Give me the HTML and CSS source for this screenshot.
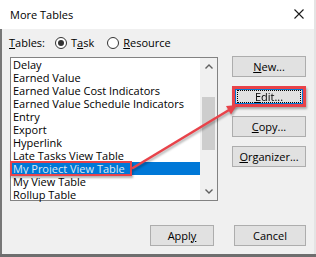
FILE: index.html
```html
<!DOCTYPE html>
<html lang="en">
<head>
    <meta charset="UTF-8">
    <meta name="viewport" content="width=device-width, initial-scale=1.0">
    <title>More Tables</title>
    <link rel="stylesheet" href="styles.css">
</head>
<body>
    <div class="window">
        <div class="titlebar">
            <span class="title">More Tables</span>
            <svg class="close" width="10" height="10" viewBox="0 0 10 10">
                <path d="M0.5 0.5 L9.5 9.5 M9.5 0.5 L0.5 9.5" stroke="#1a1a1a" stroke-width="1.1" fill="none"/>
            </svg>
        </div>

        <div class="content">
            <div class="picker">
                <span class="label"><u>T</u>ables:</span>
                <label class="radio"><span class="dot checked"></span><span>T<u>a</u>sk</span></label>
                <label class="radio"><span class="dot"></span><span><u>R</u>esource</span></label>
            </div>

            <div class="main">
                <div class="list">
                    <ul class="items">
                        <li>Delay</li>
                        <li>Earned Value</li>
                        <li>Earned Value Cost Indicators</li>
                        <li>Earned Value Schedule Indicators</li>
                        <li>Entry</li>
                        <li>Export</li>
                        <li>Hyperlink</li>
                        <li>Late Tasks View Table</li>
                        <li class="selected">My Project View Table</li>
                        <li>My View Table</li>
                        <li>Rollup Table</li>
                    </ul>
                    <div class="scrollbar">
                        <div class="arrow-btn">
                            <svg width="8" height="5" viewBox="0 0 8 5"><path d="M0.5 4.5 L4 1 L7.5 4.5" stroke="#606060" stroke-width="1.4" fill="none"/></svg>
                        </div>
                        <div class="track"><div class="thumb"></div></div>
                        <div class="arrow-btn">
                            <svg width="8" height="5" viewBox="0 0 8 5"><path d="M0.5 0.5 L4 4 L7.5 0.5" stroke="#606060" stroke-width="1.4" fill="none"/></svg>
                        </div>
                    </div>
                    <!-- annotation box round the selected row -->
                    <span class="mark"></span>
                </div>

                <div class="actions">
                    <button class="btn"><u>N</u>ew...</button>
                    <button class="btn edit"><u>E</u>dit...</button>
                    <button class="btn"><u>C</u>opy...</button>
                    <button class="btn"><u>O</u>rganizer...</button>
                </div>
            </div>

            <div class="footer">
                <button class="btn apply">Appl<u>y</u></button>
                <button class="btn cancel">Cancel</button>
            </div>
        </div>

        <!-- annotation arrow -->
        <svg class="pointer" width="316" height="257" viewBox="0 0 316 257">
            <line x1="132" y1="168.5" x2="229" y2="110" stroke="#e8434a" stroke-width="2.6"/>
            <polygon points="237,105 231,114.5 226,106" fill="#e8434a"/>
        </svg>
    </div>
</body>
</html>
```

FILE: styles.css
```css
html, body {
    margin: 0;
    padding: 0;
}

body {
    background: #6e6e6e;
    font-family: "Open Sans", "Noto Sans", sans-serif;
    font-size: 11px;
    color: #000;
    width: 316px;
    height: 257px;
    overflow: hidden;
}

u {
    text-decoration: underline;
    text-underline-offset: 1px;
}

.window {
    position: relative;
    width: 316px;
    height: 254px;
    display: flex;
    flex-direction: column;
    border-right: 2px solid #e4e4e4;
    box-sizing: border-box;
}

.titlebar {
    height: 29px;
    background: #fff;
    display: flex;
    justify-content: space-between;
    align-items: center;
    padding: 0 10px 1px 10px;
    box-sizing: border-box;
}

.content {
    flex: 1;
    background: #f0f0f0;
    border-left: 2px solid #777;
    padding-left: 8px;
    display: flex;
    flex-direction: column;
}

.picker {
    height: 28px;
    display: flex;
    align-items: center;
    padding-bottom: 1px;
    box-sizing: border-box;
}

.label {
    margin-left: -1px;
    margin-right: 10px;
}

.radio {
    display: flex;
    align-items: center;
    gap: 4px;
    margin-right: 13px;
}

.dot {
    width: 12px;
    height: 12px;
    border: 1px solid #333;
    border-radius: 50%;
    background: #fff;
    box-sizing: border-box;
    display: flex;
    align-items: center;
    justify-content: center;
}

.dot.checked::after {
    content: "";
    width: 6px;
    height: 6px;
    border-radius: 50%;
    background: #333;
}

.main {
    display: flex;
    gap: 14px;
}

.list {
    position: relative;
    width: 208px;
    height: 144px;
    border: 1px solid #828282;
    background: #fff;
    box-sizing: border-box;
    display: flex;
}

.items {
    flex: 1;
    list-style: none;
    margin: 0;
    padding: 0;
}

.items li {
    height: 13px;
    line-height: 13px;
    padding-left: 2px;
    white-space: nowrap;
}

.items li.selected {
    background: #0078d7;
    color: #dfe8f2;
}

.scrollbar {
    width: 17px;
    background: #f0f0f0;
    display: flex;
    flex-direction: column;
}

.arrow-btn {
    height: 17px;
    display: flex;
    align-items: center;
    justify-content: center;
}

.track {
    flex: 1;
}

.thumb {
    margin: 22px 2px 0 2px;
    height: 53px;
    background: #cdcdcd;
}

.mark {
    position: absolute;
    left: -1px;
    top: 103px;
    width: 122px;
    height: 15px;
    border: 2px solid #e8434a;
    box-sizing: border-box;
    box-shadow: 1px 2px 2px rgba(0, 0, 0, 0.3);
}

.actions {
    display: flex;
    flex-direction: column;
    gap: 9px;
    margin-top: -1px;
}

.btn {
    position: relative;
    width: 74px;
    height: 21px;
    padding: 0;
    background: #e1e1e1;
    border: 1px solid #adadad;
    box-sizing: border-box;
    font-family: inherit;
    font-size: 11px;
    color: #000;
    line-height: 18px;
}

.edit {
    border-color: #0078d7;
    box-shadow: inset 0 0 0 3px #0078d7;
    outline: 3px solid #e8434a;
    outline-offset: -3px;
    filter: drop-shadow(1px 2px 1px rgba(0, 0, 0, 0.3));
}

.edit::after {
    content: "";
    position: absolute;
    top: 3px;
    left: 4px;
    right: 4px;
    bottom: 3px;
    border: 1px dotted #000;
}

.footer {
    margin-top: 24px;
    padding-right: 8px;
    display: flex;
    justify-content: flex-end;
    gap: 20px;
}

.apply {
    width: 64px;
}

.cancel {
    width: 72px;
}

.pointer {
    position: absolute;
    top: 0;
    left: 0;
    pointer-events: none;
    filter: drop-shadow(1px 2px 1px rgba(0, 0, 0, 0.3));
}
```
